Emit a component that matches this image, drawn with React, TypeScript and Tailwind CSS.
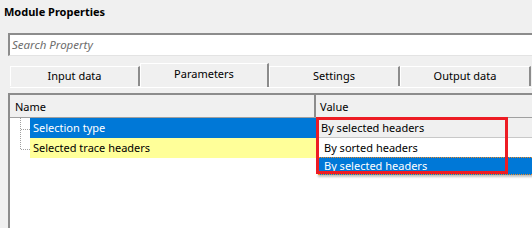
import React from 'react'

const font = "font-['Noto_Sans',sans-serif]"

function TreeLines({ last }: { last: boolean }) {
  // dotted tree connector for one row of the property grid
  return (
    <svg width="20" height="20" className="block">
      <line x1="10.5" y1="0" x2="10.5" y2={last ? 11 : 20} stroke="#a0a0a0" strokeDasharray="1 1" />
      <line x1="11" y1="11.5" x2="20" y2="11.5" stroke="#a0a0a0" strokeDasharray="1 1" />
    </svg>
  )
}

function Tab({ label, active, width }: { label: string; active?: boolean; width: string }) {
  if (active) {
    return (
      <div className={`${width} h-[24px] bg-[#f0f0f0] border-t border-l border-white border-r-2 border-r-[#8c8c8c] flex items-center justify-center pb-[2px] text-[11px] text-black`}>
        {label}
      </div>
    )
  }
  return (
    <div className={`${width} h-[20px] mb-[1px] bg-[#f0f0f0] border-t border-l border-white border-r-2 border-r-[#8c8c8c] flex items-center justify-center text-[11px] text-black`}>
      {label}
    </div>
  )
}

export default function App() {
  return (
    <div className={`w-[532px] h-[228px] bg-[#f0f0f0] overflow-hidden relative ${font}`}>
      <div className="pt-[4px] pl-[4px] h-[33px] text-[11px] leading-[16px] font-bold text-black">Module Properties</div>

      <div className="ml-[8px] h-[23px] bg-white border-t-2 border-l-2 border-[#8c8c8c] border-b border-b-[#e3e3e3] flex items-center pl-[2px]">
        <span className="text-[11.5px] italic text-[#6d6d6d]">Search Property</span>
      </div>

      <div className="mt-[7px] ml-[10px] flex items-end h-[24px]">
        <Tab label="Input data" width="w-[130px]" />
        <Tab label="Parameters" active width="w-[129px]" />
        <Tab label="Settings" width="w-[131px]" />
        <Tab label="Output data" width="w-[131px]" />
      </div>
      <div className="ml-[10px] h-[1px] bg-white" />

      <div className="mt-[5px] ml-[8px] h-[200px] bg-white border-t-2 border-l-2 border-[#8c8c8c] relative">
        <div className="flex h-[23px] bg-[#f0f0f0] border-b border-[#a0a0a0] text-[11px] text-black">
          <div className="w-[306px] pl-[5px] pt-[2px] flex items-center border-r-2 border-[#8c8c8c]">Name</div>
          <div className="flex-1 pl-[4px] pt-[2px] flex items-center">Value</div>
        </div>

        <div className="flex h-[20px] text-[11px]">
          <div className="w-[20px]"><TreeLines last={false} /></div>
          <div className="w-[286px] bg-[#0078d7] text-white pl-[3px] pt-[1px] flex items-center">Selection type</div>
          <div className="flex-1 bg-[#f0f0f0] border-b border-[#c8c8c8] pl-[5px] pt-[1px] flex items-center text-black">By selected headers</div>
        </div>
        <div className="flex h-[20px] text-[11px]">
          <div className="w-[20px]"><TreeLines last /></div>
          <div className="w-[286px] bg-[#ffff99] text-black pl-[3px] pt-[1px] flex items-center">Selected trace headers</div>
          <div className="flex-1" />
        </div>

        {/* open dropdown list */}
        <div className="absolute left-[308px] top-[44px] w-[240px] shadow-[0_2px_2px_rgba(0,0,0,0.25)] text-[11px]">
          <div className="h-[18px] bg-white text-black pl-[6px] flex items-center">By sorted headers</div>
          <div className="h-[18px] bg-[#0078d7] text-white pl-[5px] flex items-center border border-dotted border-[#f08a24]">By selected headers</div>
        </div>
      </div>

      {/* annotation box */}
      <div className="absolute left-[316px] top-[117px] w-[192px] h-[57px] border-[3px] border-[#ed1c24]" />
    </div>
  )
}
